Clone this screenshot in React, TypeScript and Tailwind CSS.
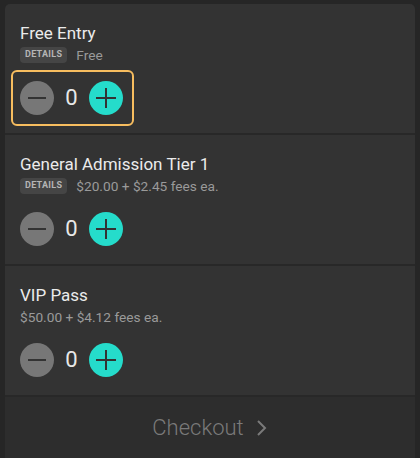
import React from "react";

function Minus() {
  return (
    <div className="w-[34px] h-[34px] rounded-full bg-[#777777] flex items-center justify-center shrink-0">
      <svg width="20" height="20" viewBox="0 0 20 20">
        <line x1="1" y1="10" x2="19" y2="10" stroke="#333333" strokeWidth="2" />
      </svg>
    </div>
  );
}

function Plus() {
  return (
    <div className="w-[34px] h-[34px] rounded-full bg-[#25dccb] flex items-center justify-center shrink-0">
      <svg width="22" height="22" viewBox="0 0 22 22">
        <line x1="1" y1="11" x2="21" y2="11" stroke="#333333" strokeWidth="2" />
        <line x1="11" y1="1" x2="11" y2="21" stroke="#333333" strokeWidth="2" />
      </svg>
    </div>
  );
}

function Stepper({ focused }: { focused?: boolean }) {
  return (
    <div
      className={
        "mt-[5px] ml-[-9px] self-start flex items-center gap-[11px] pl-[7px] pr-[9px] py-[9px] rounded-[6px] border-2 " +
        (focused ? "border-[#f7bd5f]" : "border-transparent")
      }
    >
      <Minus />
      <span className="text-[22px] leading-none text-[#e8e8e8] w-[13px] text-center">0</span>
      <Plus />
    </div>
  );
}

function Details() {
  return (
    <span className="h-4 px-[5px] rounded-sm bg-[#454545] text-[9px] font-bold tracking-[0.3px] text-[#b5b5b5] flex items-center mr-[9px]">
      DETAILS
    </span>
  );
}

function Item({
  title,
  price,
  details,
  focused,
  border,
}: {
  title: string;
  price: string;
  details?: boolean;
  focused?: boolean;
  border?: boolean;
}) {
  return (
    <div className={"h-[131px] pl-[15px] pt-[17px] flex flex-col " + (border ? "border-b-2 border-[#282828]" : "")}>
      <div className="text-[17px] leading-6 text-[#ebebeb]">{title}</div>
      <div className="h-5 flex items-center">
        {details && <Details />}
        <span className="text-[13.7px] text-[#9a9a9a]">{price}</span>
      </div>
      <Stepper focused={focused} />
    </div>
  );
}

export default function App() {
  return (
    <div
      className="w-[420px] h-[458px] bg-[#262626] pt-[4px] pl-[5px] pr-[5px] overflow-hidden"
      style={{ fontFamily: "Roboto, 'Liberation Sans', sans-serif" }}
    >
      <div className="h-full bg-[#333333] rounded-t-[5px] flex flex-col">
        <Item title="Free Entry" price="Free" details focused border />
        <Item title="General Admission Tier 1" price="$20.00 + $2.45 fees ea." details border />
        <Item title="VIP Pass" price="$50.00 + $4.12 fees ea." border />
        <div className="flex-1 bg-[#2d2d2d] flex items-start justify-center pt-[17px]">
          <div className="flex items-center gap-[12px]">
            <span className="text-[22px] font-light leading-7 text-[#7a7a7a]">Checkout</span>
            <svg width="12" height="18" viewBox="0 0 12 18">
              <polyline points="2,2 9,9 2,16" fill="none" stroke="#7a7a7a" strokeWidth="2" />
            </svg>
          </div>
        </div>
      </div>
    </div>
  );
}
